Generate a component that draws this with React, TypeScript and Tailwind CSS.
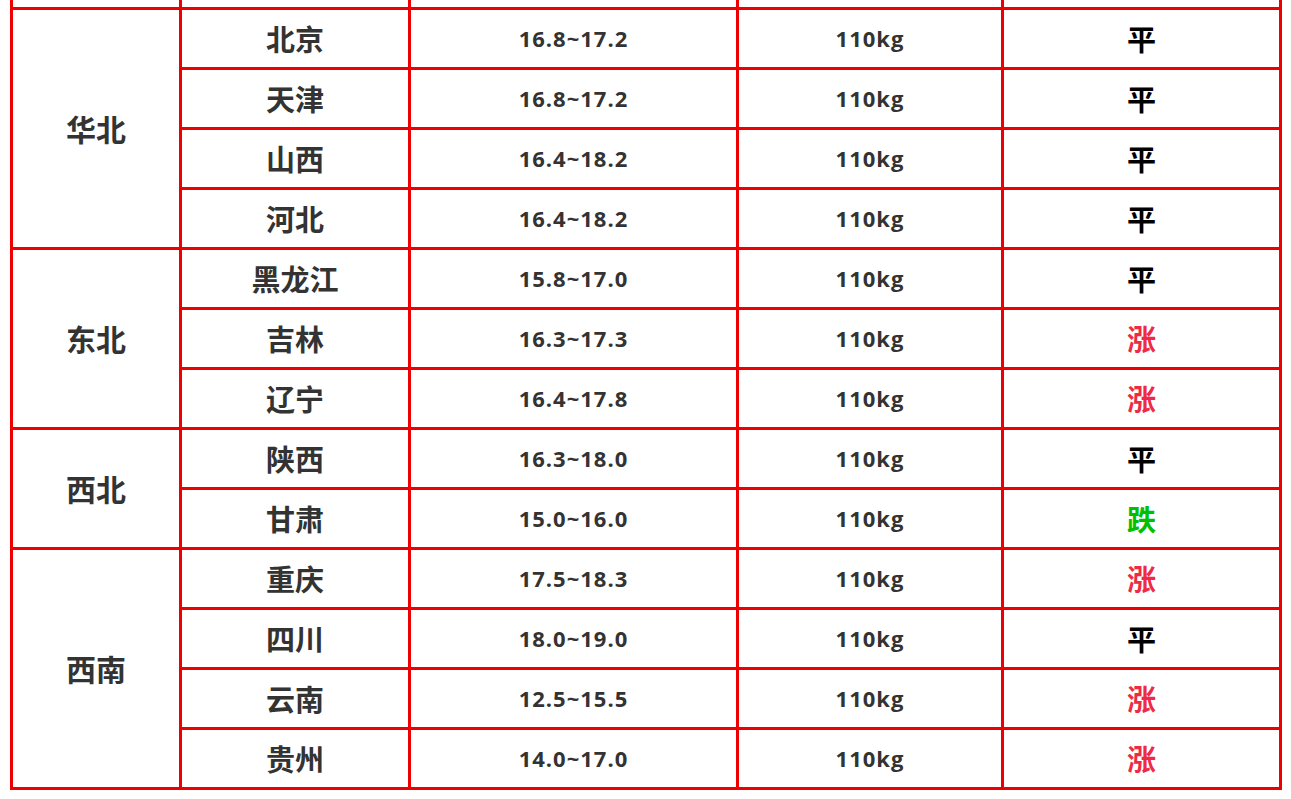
import React from "react";

type Row = { city: string; price: string; status: "平" | "涨" | "跌" };
type Group = { region: string; rows: Row[] };

const groups: Group[] = [
  {
    region: "华北",
    rows: [
      { city: "北京", price: "16.8~17.2", status: "平" },
      { city: "天津", price: "16.8~17.2", status: "平" },
      { city: "山西", price: "16.4~18.2", status: "平" },
      { city: "河北", price: "16.4~18.2", status: "平" },
    ],
  },
  {
    region: "东北",
    rows: [
      { city: "黑龙江", price: "15.8~17.0", status: "平" },
      { city: "吉林", price: "16.3~17.3", status: "涨" },
      { city: "辽宁", price: "16.4~17.8", status: "涨" },
    ],
  },
  {
    region: "西北",
    rows: [
      { city: "陕西", price: "16.3~18.0", status: "平" },
      { city: "甘肃", price: "15.0~16.0", status: "跌" },
    ],
  },
  {
    region: "西南",
    rows: [
      { city: "重庆", price: "17.5~18.3", status: "涨" },
      { city: "四川", price: "18.0~19.0", status: "平" },
      { city: "云南", price: "12.5~15.5", status: "涨" },
      { city: "贵州", price: "14.0~17.0", status: "涨" },
    ],
  },
];

const cell = "border-[3px] border-[#ee0000] text-center align-middle p-0";
const cjk = "font-['Noto_Sans_CJK_SC',sans-serif]";
const num = "font-['Open_Sans','Noto_Sans_CJK_SC',sans-serif]";

function statusClass(s: Row["status"]) {
  if (s === "涨") return "text-[#ee2a45]";
  if (s === "跌") return "text-[#00c000]";
  return "text-black";
}

export default function App() {
  return (
    <div className="w-[1291px] h-[799px] overflow-hidden bg-white">
      <table className="border-collapse table-fixed ml-[10px] mt-[-53px] w-[1269px]">
        <colgroup>
          <col className="w-[169px]" />
          <col className="w-[229px]" />
          <col className="w-[328px]" />
          <col className="w-[265px]" />
          <col className="w-[278px]" />
        </colgroup>
        <tbody>
          <tr className="h-[60px]">
            <td className={cell}></td>
            <td className={cell}></td>
            <td className={cell}></td>
            <td className={cell}></td>
            <td className={cell}></td>
          </tr>
          {groups.map((g) =>
            g.rows.map((r, i) => (
              <tr key={g.region + r.city} className="h-[60px]">
                {i === 0 && (
                  <td
                    rowSpan={g.rows.length}
                    className={`${cell} ${cjk} text-[30px] font-bold text-[#333]`}
                  >
                    {g.region}
                  </td>
                )}
                <td className={`${cell} ${cjk} text-[29px] font-bold text-[#333]`}>{r.city}</td>
                <td className={`${cell} ${num} text-[22px] font-bold text-[#333] tracking-[1px]`}>
                  {r.price}
                </td>
                <td className={`${cell} ${num} text-[22px] font-bold text-[#333] tracking-[1px]`}>
                  110kg
                </td>
                <td className={`${cell} ${cjk} text-[29px] font-bold ${statusClass(r.status)}`}>
                  {r.status}
                </td>
              </tr>
            ))
          )}
        </tbody>
      </table>
    </div>
  );
}
